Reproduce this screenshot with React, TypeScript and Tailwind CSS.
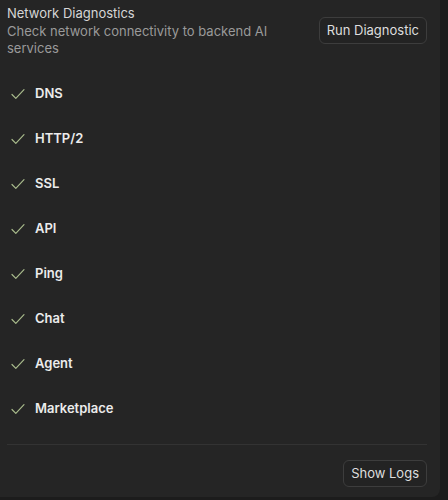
const checks = ["DNS", "HTTP/2", "SSL", "API", "Ping", "Chat", "Agent", "Marketplace"];

function Check() {
  return (
    <svg width="16" height="16" viewBox="0 0 16 16" fill="none" className="text-[#a9bb8c]">
      <path d="M2 8.5l3.8 3.8L14 3.6" stroke="currentColor" strokeWidth="1.2" strokeLinecap="round" strokeLinejoin="round" />
    </svg>
  );
}

export default function App() {
  return (
    <div className="w-[448px] h-[500px] bg-[#1c1c1c] overflow-hidden" style={{ fontFamily: "Inter, 'Noto Sans', sans-serif" }}>
      <div className="w-[440px] h-[497px] bg-[#252525] rounded-br-lg pl-[7px] pr-[13px] flex flex-col">
        {/* Header */}
        <div className="flex justify-between items-start pt-[3px]">
          <div className="w-[290px]">
            <h2 className="text-[13px] leading-[20px] text-[#d6d6d6]">Network Diagnostics</h2>
            <p className="text-[13px] leading-[17px] text-[#9a9a9a]">
              Check network connectivity to backend AI
              <br />
              services
            </p>
          </div>
          <button className="mt-[14px] h-[27px] px-[7px] rounded-md border border-[#3d3d3d] bg-[#232323] text-[13px] text-[#dedede]">
            Run Diagnostic
          </button>
        </div>

        {/* Checks */}
        <div className="flex flex-col mt-[14px]">
          {checks.map((name) => (
            <div key={name} className="h-[45px] flex items-center gap-[9px] pl-[3px]">
              <Check />
              <span className="text-[13px] font-semibold text-[#ececec]">{name}</span>
            </div>
          ))}
        </div>

        <div className="mt-[13px] border-t border-[#333333]" />

        <div className="flex justify-end mt-[15px]">
          <button className="h-[27px] px-[7px] rounded-md border border-[#3d3d3d] bg-[#232323] text-[13px] text-[#dedede]">
            Show Logs
          </button>
        </div>
      </div>
    </div>
  );
}
